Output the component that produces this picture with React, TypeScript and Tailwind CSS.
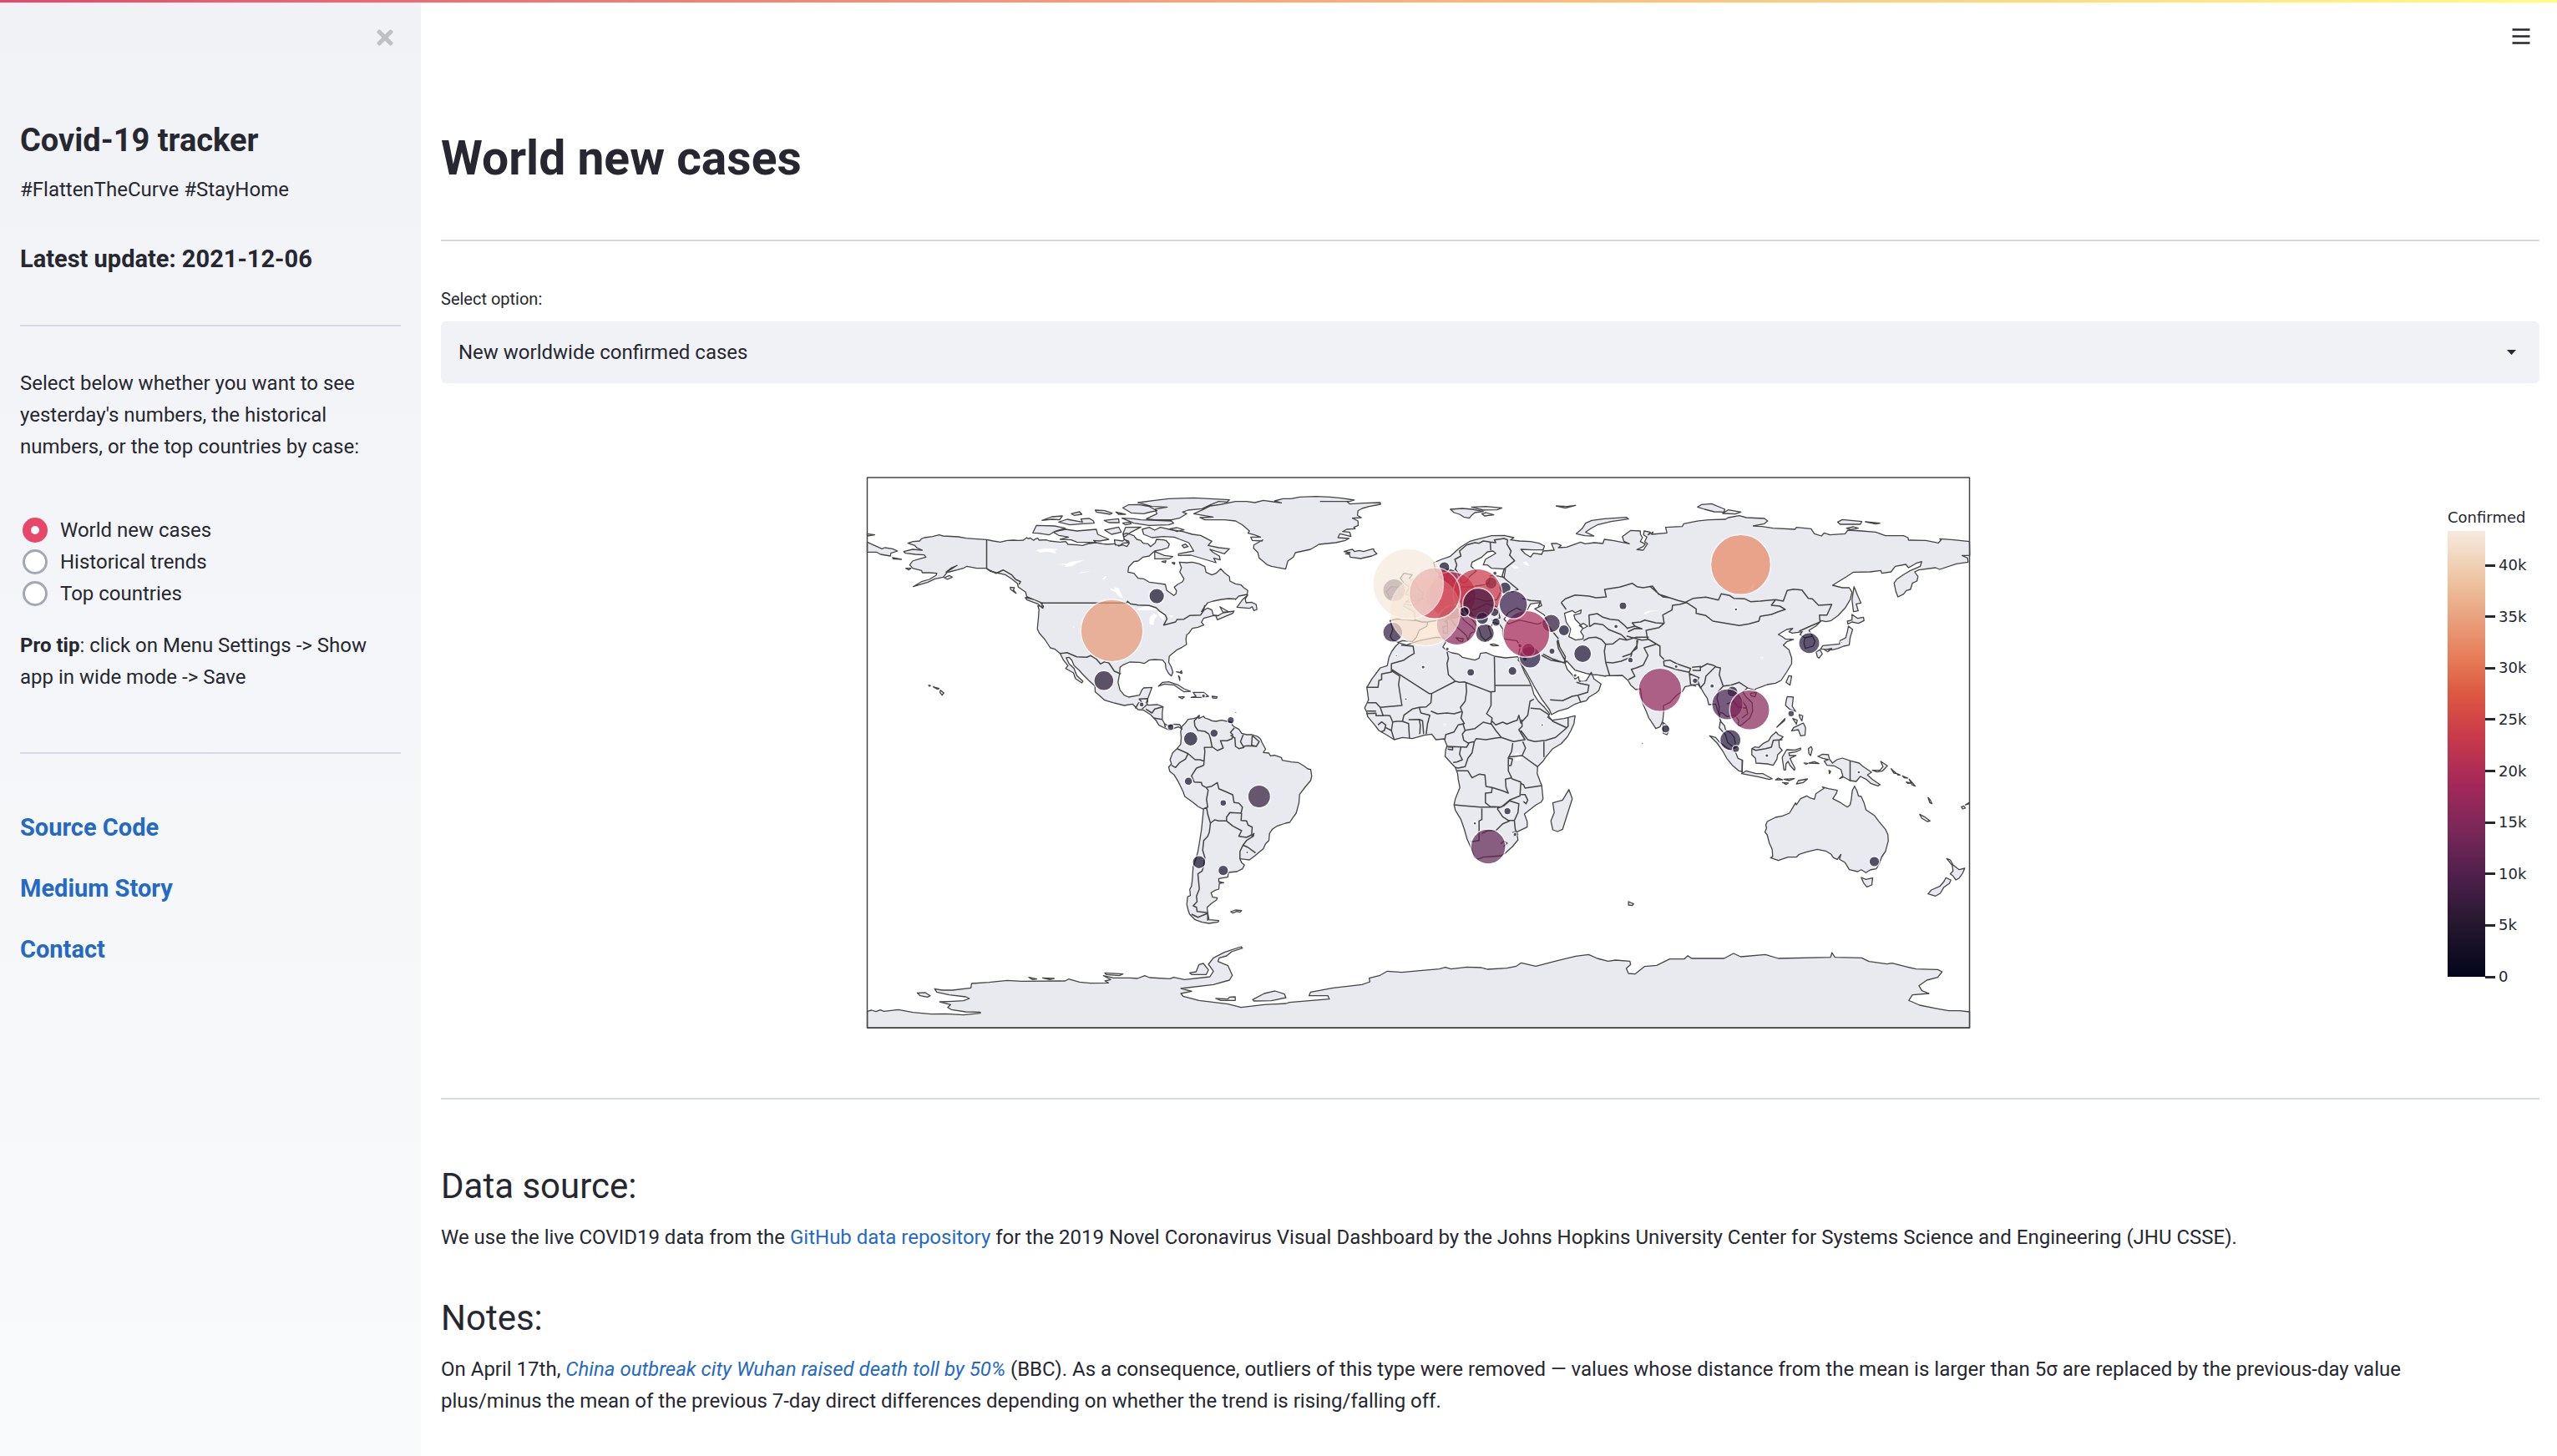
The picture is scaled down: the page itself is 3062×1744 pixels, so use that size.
import React, { useState } from "react";
import { FaTimes } from "react-icons/fa";

/* ---------- map geometry ---------- */

type Tile = { x: number; y: number; kx: number; ky: number };

// Each tile is a local coordinate grid placed on the 1321 x 659 equirectangular map.
const third = 1 / 3;
const NA: Tile = { x: -8, y: -12, kx: third, ky: third };
const SA: Tile = { x: 342, y: 248, kx: third, ky: third };
const GR: Tile = { x: 442, y: -12, kx: third, ky: third };
const EU: Tile = { x: 582, y: 8, kx: third, ky: third };
const AF: Tile = { x: 562, y: 188, kx: third, ky: third };
const AS: Tile = { x: 862, y: -2, kx: third, ky: third };
const OC: Tile = { x: 922, y: 208, kx: third, ky: third };
const AN: Tile = { x: -18, y: 488, kx: 0.8673, ky: third };

const place = (t: Tile, pts: string) =>
  pts
    .trim()
    .split(/\s+/)
    .map((p) => {
      const [a, b] = p.split(",").map(Number);
      return `${(t.x + a * t.kx).toFixed(1)} ${(t.y + b * t.ky).toFixed(1)}`;
    })
    .join("L");

const line = (t: Tile, pts: string) => `M${place(t, pts)}`;
const shape = (...parts: [Tile, string][]) => `M${parts.map(([t, p]) => place(t, p)).join("L")}Z`;
const shapes = (t: Tile, list: string[]) => list.map((p) => shape([t, p])).join("");
const lines = (t: Tile, list: string[]) => list.map((p) => line(t, p)).join("");

const northAmerica = shape(
  [NA, "173,272 192,266 215,264 222,256 232,252 262,248 285,242 300,246 355,249 382,254 410,256 455,259 480,264 505,268 530,262 552,261 570,262 588,261 600,252 606,256 612,253 625,262 632,256 640,254 644,261 670,260 682,264 720,268 740,266 748,276 780,278 800,280 820,274 850,270 872,274 890,276 915,274 930,282 945,278 960,284 968,272 966,264 950,258 946,240 960,236 985,245 995,258 1010,262 1018,272 1035,274 1045,284 1062,270 1066,258 1090,260 1100,262 1112,275 1108,288 1085,295 1060,300 1050,308 1040,318 1018,322 1000,336 985,338 966,358 964,376 985,380 1000,398 1020,400 1040,412 1070,416 1098,420 1103,442 1118,452 1128,460 1136,454 1138,442 1130,430 1142,420 1160,410 1165,400 1150,375 1156,360 1148,340 1175,342 1195,340 1220,346 1240,356 1244,376 1265,386 1280,380 1297,364 1310,378 1328,392 1330,408 1350,418"],
  [GR, "0,418 20,422 30,432 44,442 42,456 12,462 0,474"],
  [NA, "1350,472 1325,471 1300,474 1270,480 1250,486 1235,506 1228,518 1250,505 1265,512 1270,530 1290,532 1268,533 1235,542 1228,556 1236,566 1215,574 1195,578 1182,596 1175,600 1172,616 1174,636 1158,646 1140,655 1112,678 1110,700 1120,718 1125,735 1120,749 1110,740 1100,722 1098,704 1088,692 1060,690 1040,692 1022,704 1005,700 970,699 945,710 935,718 934,740 928,772 935,800 950,818 966,825 1005,818 1013,800 1020,792 1050,790 1044,806 1038,822 1030,845 1036,854 1070,852 1090,860 1087,880 1087,905 1095,920 1112,930 1128,922 1150,924 1158,940 1146,932 1132,936 1115,944 1095,936 1075,926 1064,908 1045,888 1020,872 1000,870 980,850 950,855 910,845 880,836 860,818 846,806 845,785 822,764 800,742 788,728 770,712 762,692 752,682 742,684 752,705 770,722 780,748 802,768 798,774 775,758 768,738 740,722 748,712 732,692 720,668 700,652 685,648 665,618 645,595 638,580 642,540 644,510 640,497 655,500 656,487 625,474 600,464 596,448 570,430 566,416 545,400 525,386 510,382 490,378 468,372 455,362 420,362 385,355 372,362 350,368 322,375 310,376 330,360 350,352 318,372 300,394 270,400 245,412 192,428 222,410 250,402 274,388 277,380 250,378 225,378 222,370 190,362 180,350 190,336 215,328 238,322 232,314 200,312 165,308 158,302 190,294 225,297 205,288 198,280 180,274"],
);

const southAmerica = shape([
  SA,
  "103,170 108,150 120,138 130,125 150,122 162,118 170,110 168,122 185,114 190,120 205,125 215,130 230,132 250,128 270,132 285,135 290,148 300,154 312,160 322,175 340,180 360,180 380,187 390,196 395,208 408,232 400,244 420,246 425,256 440,254 465,262 468,272 500,278 525,280 545,292 560,303 570,305 574,328 570,345 552,366 530,395 528,425 518,462 508,476 495,495 480,498 450,508 432,520 422,535 420,560 408,572 400,590 385,602 370,615 350,630 335,628 316,626 322,640 332,648 325,662 305,672 275,675 272,692 240,697 240,708 258,712 242,714 240,735 225,740 212,748 218,764 235,766 232,774 215,785 198,800 200,820 205,845 240,848 238,853 205,858 180,854 155,845 135,825 130,810 125,790 128,762 138,758 136,735 142,725 145,700 148,655 158,625 165,600 170,570 178,520 182,480 185,448 165,438 150,425 118,402 112,385 95,350 80,325 64,312 60,296 70,285 65,270 74,245 90,230 103,215 105,190",
]);

const greenland = shape(
  [NA, "1200,166 1232,152 1260,138 1300,132 1350,122"],
  [GR, "0,122 40,122 70,126 100,118 140,124 165,127 140,120 170,112 200,112 230,106 290,104 340,106 380,110 427,117 410,122 305,122 400,122 412,131 460,128 520,126 521,132 480,140 455,147 440,155 438,172 452,180 420,182 440,192 441,208 425,215 430,220 400,222 385,230 410,232 415,248 375,238 368,252 408,255 395,262 360,270 300,276 270,294 215,306 208,322 188,336 180,365 165,362 130,355 115,350 85,325 80,305 65,290 66,278 98,260 95,264 60,262 55,250 90,250 68,242 45,236 50,228 25,206 0,192"],
  [NA, "1310,188 1240,188 1222,180 1270,178"],
);

const eurasia = shape(
  [EU, "292,282 320,270 350,260 375,238 390,225 420,206 440,200 480,190 500,185 545,184 580,192 568,200 600,204 640,206 670,212 690,222 685,236 650,236 605,234 620,250 640,262 650,248 680,252 685,240 725,237 715,213 735,213 750,220 740,228 770,226 820,208 836,214 870,210 900,213 905,198 940,203 995,214 975,205 970,188 1000,166 1034,168 1035,180 1042,192 1034,206 1052,215 1045,224 1022,235 1045,237 1060,214 1050,206 1058,190 1046,182 1048,168 1070,172 1062,182 1080,172"],
  [AS, "235,210 290,205 285,185 345,182 350,172 395,163 440,158 500,156 510,150 550,143 575,150 640,153 652,162 640,172 600,180 632,182 670,188 750,192 755,185 808,190 820,208 845,216 855,205 875,212 930,208 940,195 990,198 1040,202 1075,215 1140,215 1156,222 1158,231 1220,232 1265,241 1275,230 1270,226 1320,230 1377,236 1378,286 1350,286 1370,295 1372,310 1330,316 1270,336 1255,330 1195,338 1180,345 1192,362 1188,378 1172,385 1165,408 1150,412 1140,425 1120,435 1112,415 1106,385 1115,372 1140,355 1165,340 1200,325 1205,308 1185,314 1158,330 1148,318 1110,325 1095,345 1062,350 1058,340 1020,345 960,346 935,362 885,393 920,402 945,402 955,418 948,445 930,475 905,502 880,520 862,524 845,520 825,540 800,555 812,575 822,595 815,612 787,620 782,600 785,582 768,570 776,560 740,565 728,560 742,548 720,552 690,570 705,578 715,586 745,588 720,596 708,608 728,625 738,655 738,675 720,705 700,735 680,745 650,750 630,758 610,765 605,770 580,762 562,776 575,795 596,815 598,845 588,870 555,898 545,895 548,880 535,860 520,862 505,865 490,852 482,850 478,865 485,885 497,898 500,912 520,925 532,940 536,965 528,975 508,958 500,930 478,905 482,880 476,855 465,820 440,822 435,800 425,785 412,762 400,748 380,752 355,758 345,775 325,788 300,815 278,825 278,850 275,880 265,902 250,908 240,892 225,870 215,845 202,815 198,790 195,765 178,768 160,752 150,735 130,717 70,718"],
  [EU, "910,690 880,685 860,684 840,680 800,668 785,652 770,635 762,640 772,665 790,685 800,700 812,692 815,708 840,706 858,676 868,700 893,718 885,742"],
  [AF, "935,210 910,225 900,238 880,243 860,250 835,265 800,275 775,288 768,270 740,232 715,190 690,145 662,98 655,92 661,80"],
  [EU, "598,610 602,580 590,562 545,556 540,540 540,520 528,502 505,496 500,510 488,510 496,532 500,545 478,562 462,545 455,520 440,500 425,480 400,462 388,470 402,490 430,512 444,528 425,535 415,560 410,545 400,535 372,510 355,488 335,482 300,490 270,495 268,510 240,525 230,550 215,566 180,562 165,568 145,560 136,548 145,522 135,490 160,484 225,490 223,460 185,438 186,430 220,436 235,420 262,408 275,395 300,382 335,368 345,352 332,340 345,325 362,330 365,355 380,370 430,368 470,362 490,355 495,330 515,328 545,335 550,305 500,302 485,290 470,290 478,270 515,248 505,240 485,243 465,262 430,280 426,295 445,312 420,332 410,350 395,356 380,320 370,305 355,318 330,325 300,312"],
);

const africa = shape([
  AF,
  "215,42 228,30 255,38 300,22 360,10 388,12 395,28 385,45 402,60 418,66 440,70 455,82 500,92 515,85 520,68 540,65 570,78 610,84 655,80 665,105 680,140 692,160 705,190 712,215 728,240 750,262 768,284 762,298 778,308 820,302 860,292 856,320 845,345 832,368 810,392 780,410 755,440 745,455 725,475 724,500 740,543 745,590 738,602 720,612 690,635 678,645 688,672 688,692 650,710 655,738 635,762 610,785 595,795 560,798 530,800 510,808 498,800 490,775 472,735 462,700 450,665 430,632 425,612 430,590 446,550 440,520 438,500 430,478 415,462 393,438 395,415 400,400 390,375 360,378 345,358 318,362 275,374 240,370 210,378 185,362 155,345 140,325 115,295 112,280 104,264 118,235 112,190 130,160 160,120 185,112 192,80 202,60",
]);

const landIslands =
  shapes(NA, [
    "1000,126 1060,118 1110,112 1200,109 1328,116 1320,124 1290,122 1260,134 1230,148 1180,153 1160,160 1175,166 1148,182 1120,188 1060,188 1030,184 1068,166 1060,150 1105,142 1050,140",
    "945,145 965,134 1000,133 1040,140 1068,155 1035,162 1020,166 975,163",
    "655,190 690,177 728,174 718,188 690,186",
    "715,196 745,186 800,196 795,185 825,183 840,192 842,200 800,202 755,206",
    "622,235 635,208 700,210 738,218 700,230 680,242 640,236",
    "695,232 740,222 780,228 850,222 855,240 895,258 862,264 840,262 850,270 780,268 760,260 720,258 750,250 715,244",
    "760,166 790,159 798,168 770,172",
    "846,153 880,155 907,164 900,168 850,160",
    "878,190 930,184 932,198 895,198",
    "920,160 955,168 930,168",
    "942,182 985,184 1010,188 1120,192 1128,200 1110,206 1040,208 985,200",
    "945,200 970,196 975,202 955,206",
    "880,225 930,214 940,232 905,240",
    "946,238 955,215 1010,214 975,232 950,250",
    "1015,222 1040,215 1060,225 1080,215 1125,225 1160,230 1195,240 1225,244 1265,265 1252,280 1290,288 1328,292 1310,310 1258,294 1270,305 1292,318 1295,332 1272,326 1280,342 1240,330 1190,315 1145,316 1145,310 1200,300 1182,270 1150,258 1130,250 1090,248 1050,252 1020,240",
    "1115,220 1140,216 1165,224 1140,230",
    "1158,280 1170,275 1180,284 1165,288",
    "1060,302 1095,316 1125,320 1112,328 1060,328",
    "1085,338 1100,335 1098,342",
    "1122,342 1132,342 1130,348",
    "915,260 945,264 952,258 965,270 945,272 935,280 918,278",
    "304,396 322,388 332,394 315,402",
    "166,362 184,362 176,368",
    "118,324 150,330 120,328",
    "541,430 556,432 552,440 562,452 542,438",
    "595,467 625,474 648,484 660,498 658,506 640,490 600,475",
    "1073,786 1088,772 1110,770 1145,782 1165,795 1188,804 1165,806 1150,796 1130,782 1095,778",
    "1190,826 1208,822 1198,808 1235,808 1253,822 1225,826",
    "1266,822 1284,824 1282,829 1268,828",
    "1146,824 1166,824 1158,831",
    "1138,734 1152,736 1156,730 1158,740",
    "1145,748 1150,755 1150,765",
    "248,782 254,784 250,786",
    "264,788 285,794 280,797",
    "290,800 302,810 296,818 288,808",
    "27,268 80,292 90,288 118,292 136,300 112,308 110,318 75,312 60,304 27,304",
    "27,238 54,242 27,246",
    "1280,536 1305,522 1345,516 1340,524 1285,547",
    "1294,500 1325,518 1305,520",
  ]) +
  shapes(GR, [
    "44,458 25,475 5,502 50,506 60,500 66,514 77,510 74,492 58,484 38,486 35,472",
    "390,302 410,296 420,294 428,302 445,298 460,302 480,296 496,292 498,300 508,310 490,318 450,327 412,322 410,312 395,310 412,306",
  ]) +
  shapes(SA, ["283,816 300,810 322,812 316,818 305,815 290,821"]) +
  shapes(EU, [
    "352,90 395,87 430,90 470,98 440,102 430,110 420,122 400,118 385,108 365,102",
    "428,82 480,80 537,85 520,92 470,93",
    "465,106 480,102 508,110 475,114",
    "732,78 770,80 802,76 765,86",
    "804,178 825,160 838,140 860,130 905,124 985,119 992,125 930,134 880,146 858,158 838,172 868,186 835,185",
    "172,338 185,320 215,325 205,338 230,360 240,380 255,392 250,412 190,425 215,405 190,395 205,370 185,355",
    "122,385 140,368 168,370 165,398 132,408",
    "495,576 508,574 525,580 505,581",
    "600,562 614,558 610,566",
    "372,552 398,555 396,566 382,562",
    "325,512 342,508 342,535 328,535",
    "332,492 340,486 342,504",
  ]) +
  shapes(AF, ["838,557 850,590 845,605 815,700 797,708 780,702 773,670 785,640 780,605 815,595"]) +
  shapes(AS, [
    "400,112 415,103 450,100 498,120 495,130 460,129 425,120",
    "490,135 510,122 556,130 535,137",
    "903,166 920,157 990,164 985,174 912,174",
    "1003,165 1055,170 1040,173",
    "935,188 960,183 977,188 950,193",
    "962,398 975,430 987,457 970,460 977,485 960,488 955,445",
    "955,498 975,512 996,508 998,520 978,530 955,525 940,532 938,522 955,518",
    "942,540 957,552 948,582 945,608 925,612 905,620 885,625 842,622 850,610 910,604 912,592 932,582 938,560",
    "826,632 840,625 848,640 836,655 830,650",
    "855,625 882,620 868,632",
    "728,718 738,720 732,752 718,742",
    "590,782 612,778 606,794 592,790",
    "275,886 290,896 298,912 290,930 277,925",
    "722,793 744,795 740,828 752,846 730,838 716,825 718,810",
    "765,895 780,888 788,905 786,932 770,934 762,912 738,916 745,905",
    "742,872 758,878 755,892",
    "765,858 778,862 775,880 768,870",
    "685,903 714,872 712,880",
  ]) +
  shapes(OC, [
    "263,304 285,310 300,328 330,350 356,362 365,385 382,392 380,432 368,430 345,410 325,385 310,358 290,330",
    "378,440 395,430 430,440 455,440 488,458 478,461 440,452",
    "500,462 510,456 525,462",
    "530,460 568,458 550,465",
    "575,477 582,465 615,459 600,472",
    "525,472 546,474 538,479",
    "415,350 425,344 440,346 455,332 475,322 485,305 502,290 510,300 527,308 512,322 514,345 524,356 508,372 505,388 492,410 470,405 430,402 428,385 415,372",
    "524,382 540,354 570,355 590,348 590,354 572,362 548,366 550,375 574,375 552,385 560,402 570,420 568,428 552,410 545,396 538,405 536,427 530,426",
    "618,350 628,343 632,352 626,375 620,368",
    "602,402 616,403 610,406",
    "620,402 640,397 656,404 640,403",
    "692,428 698,432 694,440",
    "652,378 670,370 690,372 694,388 705,402 720,390 740,384 770,394 800,402 815,415 845,435 830,445 850,462 876,480 868,484 842,475 825,460 805,450 790,468 768,465 745,452 730,458 742,448 735,425 710,412 685,410 675,395 690,390 670,385",
    "848,428 875,428 886,415 878,396 902,412 885,430 865,434",
    "915,422 935,440 925,438",
    "936,440 948,445 940,445",
    "956,448 975,456 962,455",
    "980,460 1002,485 990,480",
    "970,470 985,474 975,475",
    "1048,526 1056,535 1062,548 1054,544",
    "1018,586 1035,595 1055,610 1045,612 1025,600",
    "1168,560 1176,556 1182,564 1172,567",
    "1182,552 1196,544 1196,548",
    "470,612 500,597 525,592 550,582 562,562 572,545 575,552 590,530 612,520 622,526 640,532 645,512 675,492 668,488 690,494 722,500 718,512 706,530 735,545 758,560 768,552 772,535 776,500 784,485 792,500 798,520 808,522 818,545 825,570 855,590 870,610 895,640 904,660 905,682 895,720 882,738 872,765 862,782 840,786 825,796 808,785 795,792 765,785 750,760 730,748 735,730 722,748 708,742 700,730 680,718 650,712 610,722 585,730 575,740 545,740 510,752 482,742 490,738 488,712 478,690 470,660 462,650 468,635 465,625",
    "808,813 825,820 849,815 846,840 828,847 816,832",
    "1115,745 1128,750 1138,768 1150,778 1160,785 1180,780 1172,798 1160,815 1148,822 1138,808 1128,800 1138,790 1135,770",
    "1112,814 1130,822 1125,834 1105,848 1092,870 1075,880 1048,872 1060,858 1090,845 1105,828",
  ]) +
  shapes(AN, [
    "22,454 28,450 34,455 40,449 45,454 65,448 85,458 110,464 130,463 155,467 178,461 178,457 158,456 138,448 133,440 137,430 122,420 140,418 155,416 163,408 158,402 135,395 118,385 115,373 125,378 140,378 165,370 166,354 190,350 215,343 235,346 295,345 300,338 315,349 330,353 355,352 350,345 358,340 348,326 362,334 385,334 395,336 405,326 412,333 440,337 445,332 460,340 495,330 500,310 493,285 500,262 515,242 538,222 540,227 525,240 518,255 508,262 506,275 520,290 526,325 522,342 500,358 455,372 470,382 455,390 458,400 480,415 520,428 538,440 570,430 600,426 605,422 660,410 658,398 632,398 634,385 665,370 705,358 716,348 715,335 730,325 740,310 760,314 785,308 812,302 820,296 828,302 850,295 870,297 878,303 905,299 918,292 925,280 945,292 975,272 1000,256 1018,250 1030,264 1045,274 1055,270 1075,274 1076,286 1070,300 1073,318 1082,320 1095,293 1112,289 1130,266 1150,266 1155,254 1160,264 1205,264 1218,246 1228,258 1262,250 1280,264 1352,260 1354,243 1358,260 1395,262 1405,275 1430,284 1437,281 1455,293 1470,302 1500,304 1506,312 1500,332 1485,342 1474,362 1478,380 1488,390 1465,395 1460,415 1475,432 1500,445 1515,452 1530,452 1544,456 1544,514 22,514",
    "554,412 570,390 585,381 598,392 600,405 580,416 556,417",
    "503,408 520,410 522,403 530,402 530,415 510,415",
    "467,316 476,312 480,286 486,282 493,305 490,322 470,322",
    "91,388 102,387 109,398 105,403 95,398",
    "350,316 375,320 370,326 352,322",
    "245,332 256,338 250,340",
    "264,334 280,336 274,340",
    "1073,60 1080,68 1078,74 1073,72",
  ]);

const waters =
  shapes(EU, [
    "762,464 790,454 800,462 822,452 820,464 796,470 800,485 815,500 828,518 820,530 830,545 828,556 802,560 778,548 784,520 768,495",
    "815,508 830,500 845,510 830,518",
  ]) +
  shapes(EU, ["545,485 560,462 590,445 610,455 628,452 640,430 676,425 680,436 655,448 690,470 698,490 665,503 600,488 560,502"]);

const lakes =
  shapes(NA, [
    "633,298 665,290 712,293 700,300 708,308 670,302 650,306",
    "705,348 745,345 760,338 805,333 775,346 765,354 735,358 740,350",
    "782,380 800,375 832,373 805,378",
    "870,402 878,392 888,390 880,402",
    "900,432 912,440 918,430 930,434 946,468 935,466 918,448 902,440",
    "995,508 1030,498 1060,500 1078,512 1040,512 1010,514",
    "1040,562 1042,535 1060,525 1070,532 1058,545 1055,566",
    "1068,520 1095,520 1100,530 1090,550 1078,535",
    "1108,530 1128,532 1120,540",
    "764,570 772,572 770,577",
  ]) +
  shapes(EU, [
    "568,290 582,292 598,300 582,304",
    "612,280 625,278 636,294 622,290",
    "1045,465 1060,455 1108,454 1070,458 1052,468",
    "875,462 895,458 890,468",
  ]) +
  shapes(AF, ["645,432 650,424 660,430 668,435 664,452 645,454"]) +
  shapes(AS, ["565,425 590,405 602,385 604,398 585,415"]);

const borders =
  lines(NA, [
    "456,259 456,362",
    "455,362 468,370 490,380 515,368 545,385 560,402 578,410 572,420",
    "655,487 960,487 962,481 972,490 1000,494 1040,496 1065,504 1080,518 1098,530 1104,544 1092,566 1115,560 1135,555 1140,546 1165,545 1185,532 1225,530 1235,515 1240,495",
    "720,668 745,665 780,680 815,682 830,676 850,688 865,706 880,698 895,702 915,732 938,742",
    "990,866 1002,846 1014,844 1004,832 1034,830 1034,845",
    "1014,868 1032,852",
    "1028,868 1050,882 1060,868 1088,860",
    "1055,900 1087,905",
    "1095,920 1098,934",
  ]) +
  lines(SA, [
    "170,112 152,130 154,148 165,165 190,168 205,178 210,195 216,225 188,226 190,240 186,290",
    "214,222 235,237 256,228 246,202 270,202 288,194 290,180 282,172 296,155",
    "282,182 298,192 300,222 312,230 330,226 318,205 328,180",
    "325,222 345,220 375,222 385,205 360,183",
    "375,222 358,218 360,185",
    "90,230 112,240 130,248 120,268 100,280 85,298 70,290",
    "130,248 155,270 172,270 188,275",
    "186,290 160,300 142,328 152,350 178,352 180,362 195,370 215,365 235,352 240,374 265,385 290,396 295,424 312,426 325,440 320,462 280,460 268,476 268,490",
    "195,370 202,380 196,412 200,440 185,446",
    "196,440 200,465 210,498 206,530 200,545 186,560 182,595 190,622 186,650 180,670 165,680 170,735 160,760 162,780 148,795 160,800 162,815 200,820 200,848",
    "210,498 225,486 240,490 268,490 290,508 322,525 312,545 340,549 358,540 360,512 345,505 340,490 320,488 322,462",
    "358,545 366,535 364,545 340,560 327,577 316,600 316,626",
    "327,577 345,585 372,605",
    "142,825 165,836 200,822",
  ]) +
  lines(AF, [
    "235,38 278,42 282,68 262,80 245,92 200,105 200,135 165,142 165,162 155,165 152,190 110,190",
    "200,125 255,160 335,212 345,212 430,168 405,145 400,105 405,85 400,62",
    "345,212 342,245 325,260 300,262 275,268 245,290 240,312",
    "200,130 230,150 226,180 238,255 160,262",
    "430,168 445,172 462,170 555,206 572,205 570,80",
    "572,183 700,183",
    "468,175 470,205 465,240 448,262 455,280 450,300 462,320 440,325 425,350 395,360 392,378",
    "342,275 365,285 400,282 425,285 455,276",
    "300,262 306,282 338,290 330,320 325,358",
    "205,314 220,312 240,312 262,320 265,372",
    "262,306 300,305 304,325 302,358",
    "300,305 312,310 316,358",
    "115,245 145,245 160,262 170,290 195,292 205,315 200,345 210,378",
    "112,275 145,275",
    "110,284 145,283 145,292 172,292",
    "152,325 165,314 180,325 175,345 162,350",
    "180,335 200,345",
    "457,320 465,345 455,358 460,380 478,392 470,405 400,402",
    "402,404 420,405 420,415 402,412",
    "462,345 500,338 530,315 558,322 562,300 542,285 558,255 558,208",
    "560,310 575,325 600,315 615,322 640,312 652,308 658,290 665,318 690,290 698,240 712,232",
    "700,265 735,268 768,290",
    "558,320 575,345 595,370 625,380 640,385 665,380 680,378 658,342 670,330 668,305",
    "665,345 690,378 715,385 755,380 790,370 830,335 780,312 765,295",
    "835,300 835,330 825,340",
    "748,385 748,440",
    "672,385 682,408 670,435 725,475",
    "595,370 575,372 540,378 505,374 498,385 475,390",
    "498,385 490,425 475,445 465,475 440,480 430,478",
    "450,402 445,430 455,450 435,458 422,460",
    "636,390 632,420 622,440 670,435",
    "620,440 620,490 632,515 610,520 612,550 620,570 600,562 562,550 540,546 536,505 515,502 490,515 475,490 435,490",
    "618,445 635,447 630,470 618,472",
    "540,546 562,550 560,568 538,570 538,605 555,618 595,620 625,595 662,580 665,530 632,518",
    "425,612 455,615 520,620 575,620",
    "580,625 605,615 625,598 658,608 655,640 642,668 620,668 600,655 580,625",
    "665,535 675,540 680,552 740,543",
    "665,575 680,575 690,595 684,608 674,600",
    "525,625 525,665 515,670 515,740 485,745",
    "525,715 545,705 575,705 600,680 625,670",
    "642,670 645,700 655,720",
    "593,752 605,742 616,750 603,763",
    "635,712 648,708 650,722 638,724",
    "770,235 815,238 850,222 870,218 905,208 910,182 880,176 865,172",
    "870,218 880,243",
    "745,70 780,88 820,102",
    "798,18 805,45 825,80 822,100",
  ]) +
  lines(EU, [
    "370,305 375,290 368,270 390,258 385,240 410,218 440,210 455,212 470,204 495,208 515,210 510,200 545,195 558,200",
    "495,208 497,238",
    "558,200 555,215 570,240 565,255 583,275 545,305",
    "545,305 538,330 560,350 595,378 570,388",
    "610,410 640,418 676,420 668,440",
    "750,425 768,450",
    "750,425 765,412 800,398 850,402 875,408 912,405 906,378 960,370 1005,356 1022,368 1045,372 1078,366 1100,395 1140,408",
    "830,562 850,552 875,550 895,558 910,575 905,600 910,640 925,690",
    "910,640 935,642 965,636 1000,622 1005,602 1022,590 1022,560",
    "910,575 935,574 960,555 985,560 1020,550 1065,550",
    "852,512 850,470 880,465 900,478 925,485 955,488 975,505 990,520",
    "852,512 870,500 900,505 920,522 965,540 985,558",
    "735,562 740,590 755,618 768,640",
    "680,615 712,632 768,642",
    "700,505 720,530 740,555",
    "225,488 250,495 268,495",
    "430,370 440,410 480,420 520,415 535,380",
    "290,385 320,420 350,440 335,480",
    "350,440 400,430 440,410",
    "400,455 440,450 480,430 520,440",
    "520,440 530,480 500,490",
  ]) +
  lines(AS, [
    "230,398 250,415 275,435 300,438 330,448 360,455 335,462 310,465 308,482 275,500 280,530 262,545 215,555 220,585 245,600 265,612 265,645 280,660",
    "355,455 385,440 430,436 475,446 485,424 515,430 530,440 570,442 590,452 625,450 680,445",
    "680,445 665,465 695,468 715,480 690,488 665,498 625,505 620,522 585,532 550,538 505,530 455,522 430,502 395,494 395,478 360,455",
    "680,445 708,450 722,412 745,407 775,410 798,440 812,442 835,465 882,462 865,500 838,500 840,525",
    "765,558 800,542 840,525",
    "145,548 175,540 165,528 195,525 210,518 250,528 280,530",
    "150,560 175,548 200,550 175,540",
    "145,575 160,580 200,590 222,588",
    "185,590 182,610 160,640 130,650",
    "250,605 208,618 222,645 205,680 180,690 162,695 175,720 152,732",
    "278,665 300,662 325,675 375,692 370,706 325,696 280,682 278,665",
    "380,688 410,685 410,700 382,698",
    "408,690 435,675 455,680 470,688 482,690 478,715 492,755",
    "370,702 375,750 395,755",
    "370,710 405,725 400,735 412,765",
    "410,762 425,745 430,720 445,705 465,685",
    "492,755 520,752 550,742 580,762",
    "492,755 475,775 470,800 478,830 476,855",
    "520,765 545,780 555,800 575,830 580,855 560,870",
    "505,820 530,810 545,830 575,835",
    "785,582 812,576",
  ]) +
  lines(OC, ["768,393 768,467", "415,350 430,356 465,350 485,345 492,320 525,318", "380,392 380,440"]);

/* ---------- map markers ---------- */

type Marker = [Tile, number, number, number, string];

const ink = "#130e28";
const plum = "#2d1a38";
const grape = "#5f2450";
const berry = "#862457";

// Drawn in order, so later markers lie over earlier ones.
const markers: Marker[] = [
  [AF, 314, 117, 7, ink],
  [SA, 256, 668, 19, ink], [OC, 855, 756, 19, ink], [EU, 760, 525, 20, ink],
  [AS, 391, 736, 10, ink], [EU, 548, 373, 22, ink], [EU, 318, 405, 56, "#932659"],
  [SA, 256, 425, 12, ink], [SA, 385, 402, 41, plum], [EU, 516, 496, 15, ink],
  [NA, 1067, 462, 28, ink], [SA, 169, 638, 24, ink], [AS, 631, 655, 3, ink], [SA, 139, 195, 26, ink],
  [EU, 342, 340, 39, "#3b1d40"],
  [NA, 1235, 820, 7, ink], [EU, 575, 671, 16, ink], [EU, 512, 320, 8, ink], [AF, 742, 325, 5, ink],
  [EU, 714, 500, 33, plum], [EU, 358, 400, 86, "#c42a50"],
  [EU, 476, 535, 34, plum], [NA, 1013, 852, 9, ink], [AS, 265, 769, 78, "#932659"], [OC, 469, 375, 7, ink],
  [EU, 827, 609, 32, "#1b1330"], [EU, 717, 600, 11, ink], [EU, 150, 381, 41, "#3b1d40"],
  [EU, 620, 628, 9, ink], [EU, 375, 505, 73, berry], [AS, 917, 598, 4, ink], [EU, 638, 622, 39, "#23163a"],
  [EU, 972, 437, 14, ink], [AS, 801, 601, 38, "#23163a"], [AS, 525, 775, 20, ink],
  [EU, 632, 595, 24, "#5f1a48"], [AF, 485, 136, 14, ink], [EU, 498, 355, 22, ink],
  [OC, 338, 319, 38, "#23163a"], [OC, 22, 331, 4, ink], [AF, 252, 232, 5, ink], [NA, 877, 766, 36, "#20132f"],
  [AS, 538, 480, 6, ink], [AF, 218, 76, 4, ink], [AS, 452, 755, 8, ink], [AF, 500, 679, 6, ink],
  [AS, 323, 685, 7, ink], [AF, 391, 325, 3, ink], [EU, 330, 298, 20, ink],
  [AS, 159, 662, 10, ink], [NA, 1117, 932, 12, ink], [OC, 799, 435, 6, ink], [SA, 131, 347, 15, ink],
  [AS, 736, 854, 12, ink], [EU, 450, 392, 88, "#cb3346"], [EU, 145, 532, 36, plum], [EU, 510, 460, 16, ink],
  [AS, 555, 319, 108, "#e88660"], [EU, 467, 482, 22, ink], [OC, 358, 351, 13, ink], [EU, 453, 430, 57, "#3f1740"],
  [EU, 402, 458, 18, ink],
  [AF, 548, 762, 63, grape], [AS, 285, 909, 15, ink], [EU, 602, 580, 8, plum], [AS, 507, 821, 56, "#47204c"],
  [SA, 283, 128, 13, ink], [AF, 401, 52, 7, ink], [EU, 625, 538, 84, "#a82656"], [EU, 578, 433, 51, "#391a46"],
  [EU, 800, 687, 7, ink], [EU, 828, 708, 4, ink], [NA, 906, 586, 112, "#e89875"], [SA, 342, 603, 5, ink],
  [AS, 107, 541, 8, ink], [SA, 223, 175, 15, ink], [AS, 587, 841, 72, berry], [AF, 617, 635, 13, ink],
  [EU, 262, 455, 126, "#fbe2cd"], [EU, 296, 392, 92, "#cb3346"], [EU, 200, 358, 127, "#f6e9dc"],
  [AF, 644, 718, 7, ink], [SA, 301, 100, 4, ink],
];

function WorldMap() {
  return (
    <svg viewBox="-2 -2 1325 663" className="h-[663px] w-full" role="img" aria-label="New worldwide confirmed cases map">
      <g stroke="#444444" strokeWidth="1.3" strokeLinejoin="round">
        <path d={northAmerica + southAmerica + greenland + landIslands} fill="#e9eaf0" />
        <path d={africa} fill="#e9eaf0" />
        <path d={eurasia} fill="#e9eaf0" />
        <path d={waters} fill="#ffffff" />
        <path d={lakes} fill="#ffffff" stroke="none" />
        <path d={borders} fill="none" strokeWidth="1.5" />
        <rect x="1" y="0" width="1320" height="659" fill="none" strokeWidth="1.5" />
      </g>
      {markers.map(([t, x, y, r, c], i) => (
        <circle key={i} cx={t.x + x * t.kx} cy={t.y + y * t.ky} r={r * t.kx} fill={c} stroke="#ffffff" strokeWidth="1.5" opacity="0.7" />
      ))}
    </svg>
  );
}

/* ---------- page parts ---------- */

const Rule = ({ className }: { className: string }) => <hr className={`h-0.5 border-0 bg-[#d6d9e3] ${className}`} />;

const ticks = ["40k", "35k", "30k", "25k", "20k", "15k", "10k", "5k", "0"];

function ColorBar() {
  return (
    <div className="mt-10 w-[110px] shrink-0 font-['DejaVu_Sans',sans-serif] text-[18px]">
      <div className="mb-1.5 leading-5">Confirmed</div>
      <div className="flex items-start">
        <div className="h-[534px] w-[45px] bg-[linear-gradient(to_top,#03051a,#25182f_12%,#4c1f4b_22%,#7a2859_33%,#a3285a_43%,#c93a4a_54%,#dc5641_63%,#e67a56_71%,#ea9f7c_80%,#eec4a2_89%,#f6eadf)]" />
        <ul className="flex h-[542px] flex-col justify-between pt-[33px]">
          {ticks.map((t) => (
            <li key={t} className="flex h-4 items-center gap-1 leading-4">
              <span className="h-[3px] w-3 bg-[#262730]" />
              {t}
            </li>
          ))}
        </ul>
      </div>
    </div>
  );
}

const pages = ["World new cases", "Historical trends", "Top countries"];
const links = ["Source Code", "Medium Story", "Contact"];

function Sidebar() {
  const [page, setPage] = useState(pages[0]);
  return (
    <aside className="w-[504px] shrink-0 bg-linear-to-b from-[#f0f2f6] to-[#f9fafb] px-6 text-[24px] leading-[38px]">
      <div className="flex h-[141px] justify-end pt-7 pr-[5px]">
        <button type="button" aria-label="Close sidebar" className="h-7 text-[#bfc1c5]">
          <FaTimes size={28} />
        </button>
      </div>
      <h2 className="text-[38px] leading-[48px] font-bold">Covid-19 tracker</h2>
      <p className="mt-4">#FlattenTheCurve #StayHome</p>
      <h3 className="mt-11 text-[29px] leading-10 font-bold">Latest update: 2021-12-06</h3>
      <Rule className="mt-[59px]" />
      <p className="mt-[49px]">Select below whether you want to see yesterday's numbers, the historical numbers, or the top countries by case:</p>
      <fieldset className="mt-[62px]" aria-label="Page">
        {pages.map((p) => (
          <label key={p} className="flex items-center gap-[15px] pl-[3px]">
            <input
              type="radio"
              name="page"
              checked={page === p}
              onChange={() => setPage(p)}
              className="h-[30px] w-[30px] appearance-none rounded-full border-[3px] border-[#a3a8b4] bg-white checked:border-[10px] checked:border-[#e8476b]"
            />
            {p}
          </label>
        ))}
      </fieldset>
      <p className="mt-6">
        <strong className="font-bold">Pro tip</strong>: click on Menu Settings -&gt; Show app in wide mode -&gt; Save
      </p>
      <Rule className="mt-[71px]" />
      <nav className="mt-[68px] flex flex-col items-start gap-[33px] text-[29px] leading-10 font-bold text-[#246ac4]">
        {links.map((l) => (
          <a key={l} href="#">{l}</a>
        ))}
      </nav>
    </aside>
  );
}

export default function App() {
  return (
    <div className="flex min-h-screen flex-col bg-white font-['Roboto',sans-serif] text-[#262730]">
      <div className="h-[3px] bg-linear-to-r from-[#e8476b] to-[#fffd80]" />
      <div className="flex flex-1">
        <Sidebar />
        <main className="min-w-0 flex-1 pr-[21px] pl-6 text-[24px] leading-[38px]">
          <header className="flex h-[151px] justify-end pt-7">
            <button type="button" aria-label="Menu" className="mr-2.5 h-6">
              <svg width="24" height="24" viewBox="0 0 24 24" fill="none" stroke="#262730" strokeWidth="2.500">
                <path d="M1.500 4.500h21M1.500 12.500h21M1.500 20.500h21" />
              </svg>
            </button>
          </header>
          <h1 className="text-[57px] leading-[72px] font-bold">World new cases</h1>
          <Rule className="mt-[61px]" />
          <label htmlFor="metric" className="mt-[53px] block text-[20px] leading-8">Select option:</label>
          <div className="mt-[11px] grid">
            <select id="metric" className="col-start-1 row-start-1 h-[74px] w-full appearance-none rounded-md bg-[#f0f2f6] px-[21px]">
              <option>New worldwide confirmed cases</option>
              <option>New worldwide deaths</option>
            </select>
            <svg className="pointer-events-none col-start-1 row-start-1 mr-7 self-center justify-self-end" width="11" height="6" viewBox="0 0 11 6" fill="#262730">
              <path d="M0 0h11L5.500 6z" />
            </svg>
          </div>
          <section className="mt-[111px] flex items-start">
            <div className="min-w-0 flex-1">
              <WorldMap />
            </div>
            <div className="ml-[63px]">
              <ColorBar />
            </div>
          </section>
          <Rule className="mt-[82px]" />
          <h2 className="mt-[76px] text-[42px] leading-[56px]">Data source:</h2>
          <p className="mt-3.5">
            We use the live COVID19 data from the <a href="#" className="text-[#246ac4]">GitHub data repository</a> for the 2019 Novel Coronavirus Visual Dashboard by the Johns Hopkins University Center for Systems Science and Engineering (JHU CSSE).
          </p>
          <h2 className="mt-[50px] text-[42px] leading-[56px]">Notes:</h2>
          <p className="mt-3.5 pr-12">
            On April 17th, <a href="#" className="text-[#246ac4] italic">China outbreak city Wuhan raised death toll by 50%</a> (BBC). As a consequence, outliers of this type were removed — values whose distance from the mean is larger than 5σ are replaced by the previous-day value plus/minus the mean of the previous 7-day direct differences depending on whether the trend is rising/falling off.
          </p>
        </main>
      </div>
    </div>
  );
}
